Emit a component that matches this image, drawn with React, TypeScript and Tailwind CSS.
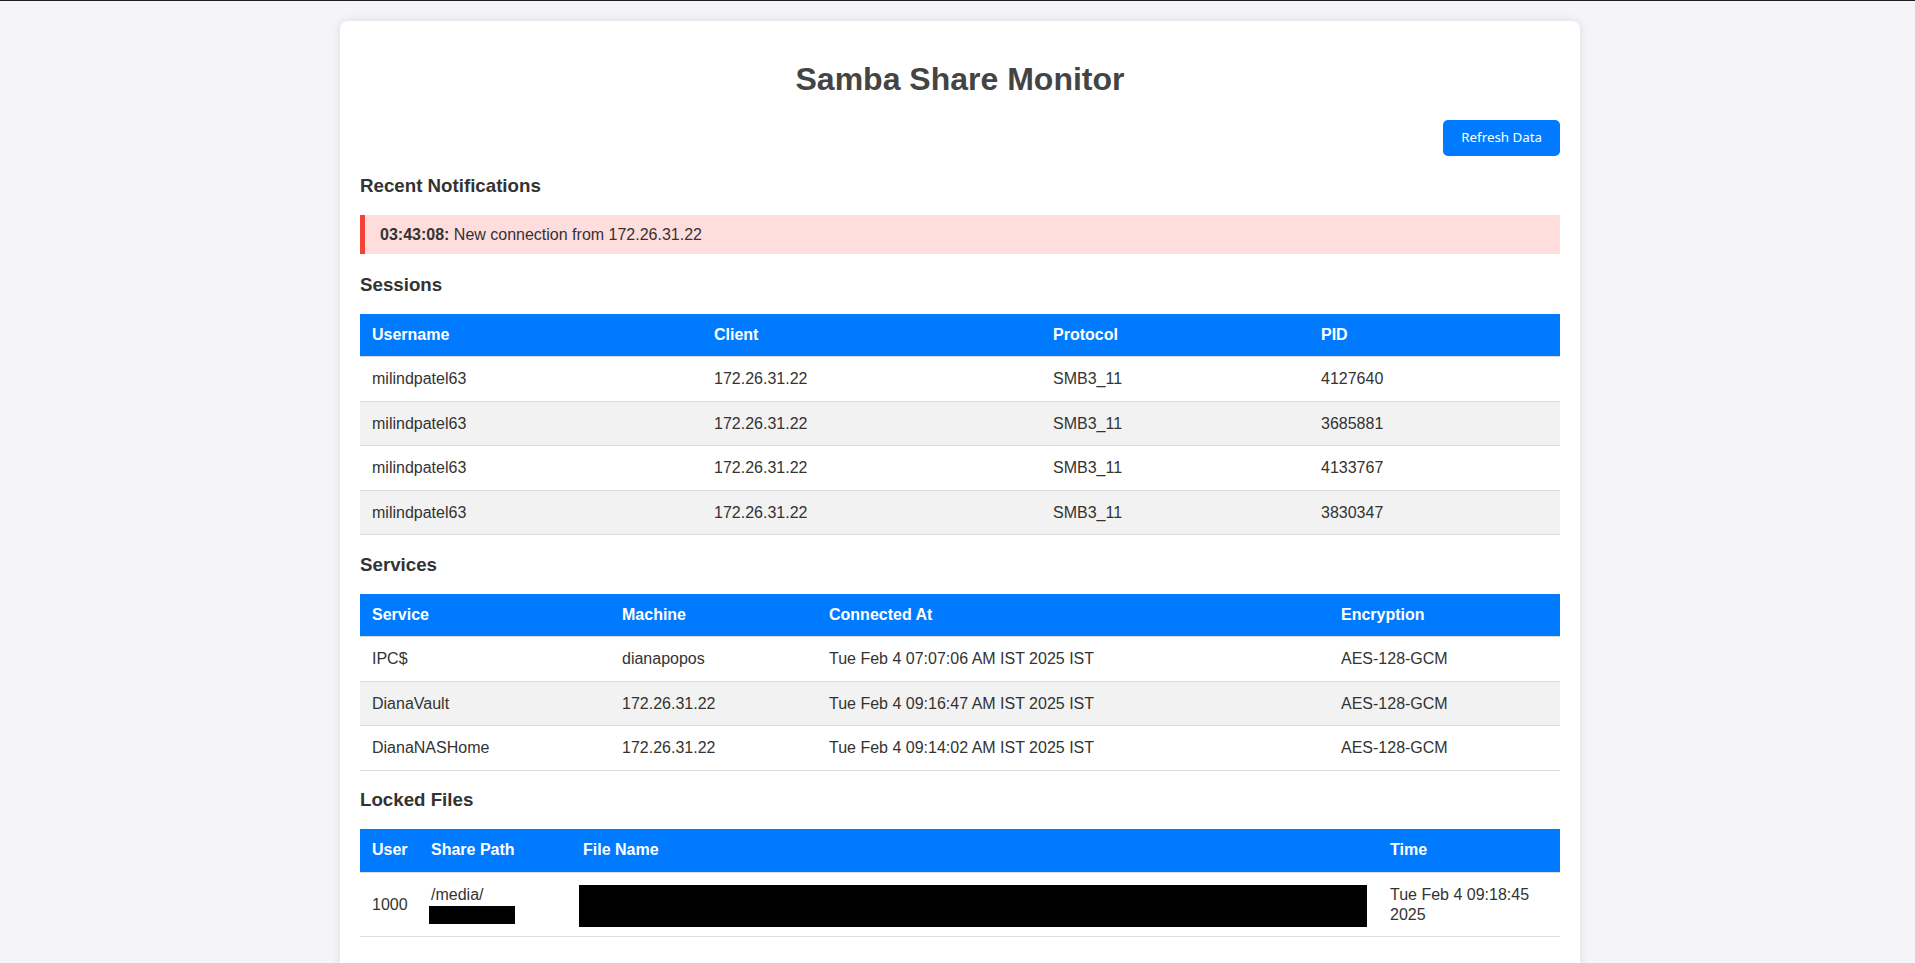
import type React from "react"

type Session = { username: string; client: string; protocol: string; pid: string }
type Service = { service: string; machine: string; connectedAt: string; encryption: string }

const sessions: Session[] = [
    { username: "milindpatel63", client: "172.26.31.22", protocol: "SMB3_11", pid: "4127640" },
    { username: "milindpatel63", client: "172.26.31.22", protocol: "SMB3_11", pid: "3685881" },
    { username: "milindpatel63", client: "172.26.31.22", protocol: "SMB3_11", pid: "4133767" },
    { username: "milindpatel63", client: "172.26.31.22", protocol: "SMB3_11", pid: "3830347" },
]

const services: Service[] = [
    { service: "IPC$", machine: "dianapopos", connectedAt: "Tue Feb 4 07:07:06 AM IST 2025 IST", encryption: "AES-128-GCM" },
    { service: "DianaVault", machine: "172.26.31.22", connectedAt: "Tue Feb 4 09:16:47 AM IST 2025 IST", encryption: "AES-128-GCM" },
    { service: "DianaNASHome", machine: "172.26.31.22", connectedAt: "Tue Feb 4 09:14:02 AM IST 2025 IST", encryption: "AES-128-GCM" },
]

const th = "px-3 py-3 text-left font-bold text-white leading-[18.4px] border-b border-[#ddd]"
const td = "px-3 py-3 text-left leading-[19.4px] border-b border-[#ddd]"

const SectionTitle: React.FC<{ children: React.ReactNode }> = ({ children }) => (
    <h3 className="text-[18.72px] font-bold leading-[21.5px] my-[18.72px] text-[#333]">{children}</h3>
)

const App: React.FC = () => {
    return (
        <div className="min-h-screen bg-[#f4f4f9] font-['Liberation_Sans',Arial,sans-serif] text-[16px] text-[#333]">
            <div className="h-px bg-[#1c1c26]"></div>
            <div className="py-5">
                <div className="ml-[340px] w-[1240px] bg-white rounded-lg p-5 shadow-[0_0_10px_rgba(0,0,0,0.1)] flow-root">
                    <h1 className="text-center text-[32px] font-bold leading-[36.8px] mt-5 mb-[22px] text-[#444]">
                        Samba Share Monitor
                    </h1>

                    <div className="flex justify-end">
                        <button className="bg-[#007bff] text-white rounded-[5px] px-[18px] h-[36px] font-['Noto_Sans',sans-serif] text-[13.33px]">
                            Refresh Data
                        </button>
                    </div>

                    <SectionTitle>Recent Notifications</SectionTitle>
                    <div className="bg-[#ffdddd] border-l-[5px] border-[#f44336] px-[15px] py-[10px] leading-[19px] mb-5">
                        <strong>03:43:08:</strong> New connection from 172.26.31.22
                    </div>

                    <SectionTitle>Sessions</SectionTitle>
                    <table className="w-full table-fixed border-collapse mb-[18.72px]">
                        <colgroup>
                            <col className="w-[342px]" />
                            <col className="w-[339px]" />
                            <col className="w-[268px]" />
                            <col />
                        </colgroup>
                        <thead>
                            <tr className="bg-[#007bff]">
                                <th className={th}>Username</th>
                                <th className={th}>Client</th>
                                <th className={th}>Protocol</th>
                                <th className={th}>PID</th>
                            </tr>
                        </thead>
                        <tbody>
                            {sessions.map((s: Session, index: number) => (
                                <tr key={index} className={index % 2 === 1 ? "bg-[#f2f2f2]" : "bg-white"}>
                                    <td className={td}>{s.username}</td>
                                    <td className={td}>{s.client}</td>
                                    <td className={td}>{s.protocol}</td>
                                    <td className={td}>{s.pid}</td>
                                </tr>
                            ))}
                        </tbody>
                    </table>

                    <SectionTitle>Services</SectionTitle>
                    <table className="w-full table-fixed border-collapse mb-[18.72px]">
                        <colgroup>
                            <col className="w-[250px]" />
                            <col className="w-[207px]" />
                            <col className="w-[512px]" />
                            <col />
                        </colgroup>
                        <thead>
                            <tr className="bg-[#007bff]">
                                <th className={th}>Service</th>
                                <th className={th}>Machine</th>
                                <th className={th}>Connected At</th>
                                <th className={th}>Encryption</th>
                            </tr>
                        </thead>
                        <tbody>
                            {services.map((s: Service, index: number) => (
                                <tr key={index} className={index % 2 === 1 ? "bg-[#f2f2f2]" : "bg-white"}>
                                    <td className={td}>{s.service}</td>
                                    <td className={td}>{s.machine}</td>
                                    <td className={td}>{s.connectedAt}</td>
                                    <td className={td}>{s.encryption}</td>
                                </tr>
                            ))}
                        </tbody>
                    </table>

                    <SectionTitle>Locked Files</SectionTitle>
                    <table className="w-full table-fixed border-collapse mb-5">
                        <colgroup>
                            <col className="w-[59px]" />
                            <col className="w-[152px]" />
                            <col className="w-[807px]" />
                            <col />
                        </colgroup>
                        <thead>
                            <tr className="bg-[#007bff]">
                                <th className={th}>User</th>
                                <th className={th}>Share Path</th>
                                <th className={th}>File Name</th>
                                <th className={th}>Time</th>
                            </tr>
                        </thead>
                        <tbody>
                            <tr className="bg-white">
                                <td className={td}>1000</td>
                                <td className={td}>
                                    <div>/media/</div>
                                    <div className="w-[86px] h-[18px] bg-black -ml-[2px] mt-[2px]"></div>
                                </td>
                                <td className={td}>
                                    <div className="w-[788px] h-[42px] bg-black -ml-[4px] -mb-[3px]"></div>
                                </td>
                                <td className={td}>Tue Feb 4 09:18:45 2025</td>
                            </tr>
                        </tbody>
                    </table>
                </div>
            </div>
        </div>
    )
}

export default App
